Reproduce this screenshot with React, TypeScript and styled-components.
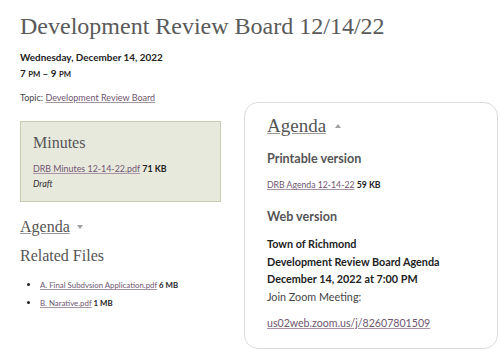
import React from 'react';
import styled, { createGlobalStyle } from 'styled-components';

const GlobalStyle = createGlobalStyle`
  body {
    margin: 0;
    background: #fff;
    font-family: Lato, "Open Sans", sans-serif;
    color: #222;
  }
`;

const Page = styled.div`
  width: 500px;
  height: 350px;
  overflow: hidden;
  padding: 0 0 0 20px;
  box-sizing: border-box;
`;

const Title = styled.h1`
  margin: 12px 0 0;
  font-family: "Liberation Serif", serif;
  font-weight: normal;
  font-size: 24px;
  line-height: 28px;
  color: #5a5a5a;
`;

const DateLine = styled.div`
  margin-top: 9px;
  font-weight: bold;
  font-size: 9.9px;
  line-height: 16px;
`;

const SmallCaps = styled.span`
  font-size: 0.78em;
`;

const Topic = styled.div`
  margin-top: 11px;
  font-size: 9px;
  line-height: 9px;
  color: #444;
`;

const Link = styled.a`
  color: #6e5570;
  text-decoration: underline;
  text-decoration-color: #a892a8;
`;

const Row = styled.div`
  display: grid;
  grid-template-columns: 201px 254px;
  column-gap: 23px;
  align-items: start;
`;

const LeftColumn = styled.div`
  display: flex;
  flex-direction: column;
`;

const MinutesBox = styled.div`
  margin-top: 19px;
  background: #e8e9dd;
  border: 1px solid #c9cbb3;
  padding: 11px 12px 10px;
`;

const BoxTitle = styled.h3`
  margin: 0;
  font-family: "Liberation Serif", serif;
  font-weight: normal;
  font-size: 16px;
  line-height: 20px;
  color: #555;
`;

const FileLine = styled.div<{ gap?: number }>`
  margin-top: ${({ gap }) => gap ?? 0}px;
  font-size: 8.9px;
  line-height: 15px;
`;

const Size = styled.span`
  font-weight: bold;
`;

const Draft = styled.div`
  font-style: italic;
  font-size: 9px;
  line-height: 15px;
  color: #333;
`;

const ToggleHeading = styled.h3<{ big?: boolean }>`
  display: flex;
  align-items: center;
  gap: ${({ big }) => (big ? 9 : 7)}px;
  margin: ${({ big }) => (big ? '0' : '15px 0 0')};
  font-family: "Liberation Serif", serif;
  font-weight: normal;
  font-size: ${({ big }) => (big ? 19 : 16)}px;
  line-height: ${({ big }) => (big ? 24 : 20)}px;
  color: #555;

  a {
    color: #555;
    text-decoration: underline;
    text-decoration-color: #999;
  }
`;

const Caret = styled.span<{ up?: boolean }>`
  width: 0;
  height: 0;
  border-left: 3.5px solid transparent;
  border-right: 3.5px solid transparent;
  ${({ up }) => (up ? 'border-bottom: 4px solid #a0a0a0;' : 'border-top: 4px solid #a0a0a0;')}
`;

const SectionTitle = styled.h3`
  margin: 9px 0 0;
  font-family: "Liberation Serif", serif;
  font-weight: normal;
  font-size: 16px;
  line-height: 20px;
  color: #555;
`;

const FileList = styled.ul`
  margin: 10px 0 0;
  padding-left: 20px;
  font-size: 7.85px;
  line-height: 17px;

  li::marker {
    font-size: 9px;
  }
`;

const Card = styled.div`
  border: 1px solid #dcdcdc;
  border-radius: 14px;
  padding: 11px 22px 15px;
  height: 247px;
  box-sizing: border-box;
`;

const CardLabel = styled.h4<{ gap: number }>`
  margin: ${({ gap }) => gap}px 0 0;
  font-size: 12.6px;
  font-weight: bold;
  line-height: 18px;
  color: #555;
`;

const CardFile = styled.div`
  margin-top: 9px;
  font-size: 8.7px;
  line-height: 16px;
`;

const AgendaText = styled.div`
  margin-top: 9px;
  font-size: 10.8px;
  line-height: 17.5px;
`;

const Strong = styled.div`
  font-weight: bold;
`;

const Plain = styled.div`
  color: #444;
`;

const ZoomLink = styled.div`
  margin-top: 10px;
  font-size: 10.6px;
  line-height: 16px;
`;

export default function App() {
  return (
    <Page>
      <GlobalStyle />
      <Title>Development Review Board 12/14/22</Title>
      <DateLine>
        Wednesday, December 14, 2022
        <br />
        7 <SmallCaps>PM</SmallCaps> – 9 <SmallCaps>PM</SmallCaps>
      </DateLine>
      <Topic>
        Topic: <Link href="#">Development Review Board</Link>
      </Topic>
      <Row>
        <LeftColumn>
          <MinutesBox>
            <BoxTitle>Minutes</BoxTitle>
            <FileLine gap={8}>
              <Link href="#">DRB Minutes 12-14-22.pdf</Link> <Size>71 KB</Size>
            </FileLine>
            <Draft>Draft</Draft>
          </MinutesBox>
          <ToggleHeading>
            <a href="#">Agenda</a>
            <Caret />
          </ToggleHeading>
          <SectionTitle>Related Files</SectionTitle>
          <FileList>
            <li>
              <Link href="#">A. Final Subdvsion Application.pdf</Link> <Size>6 MB</Size>
            </li>
            <li>
              <Link href="#">B. Narative.pdf</Link> <Size>1 MB</Size>
            </li>
          </FileList>
        </LeftColumn>
        <Card>
          <ToggleHeading big>
            <a href="#">Agenda</a>
            <Caret up />
          </ToggleHeading>
          <CardLabel gap={12}>Printable version</CardLabel>
          <CardFile>
            <Link href="#">DRB Agenda 12-14-22</Link> <Size>59 KB</Size>
          </CardFile>
          <CardLabel gap={15}>Web version</CardLabel>
          <AgendaText>
            <Strong>Town of Richmond</Strong>
            <Strong>Development Review Board Agenda</Strong>
            <Strong>December 14, 2022 at 7:00 PM</Strong>
            <Plain>Join Zoom Meeting:</Plain>
          </AgendaText>
          <ZoomLink>
            <Link href="#">us02web.zoom.us/j/82607801509</Link>
          </ZoomLink>
        </Card>
      </Row>
    </Page>
  );
}
